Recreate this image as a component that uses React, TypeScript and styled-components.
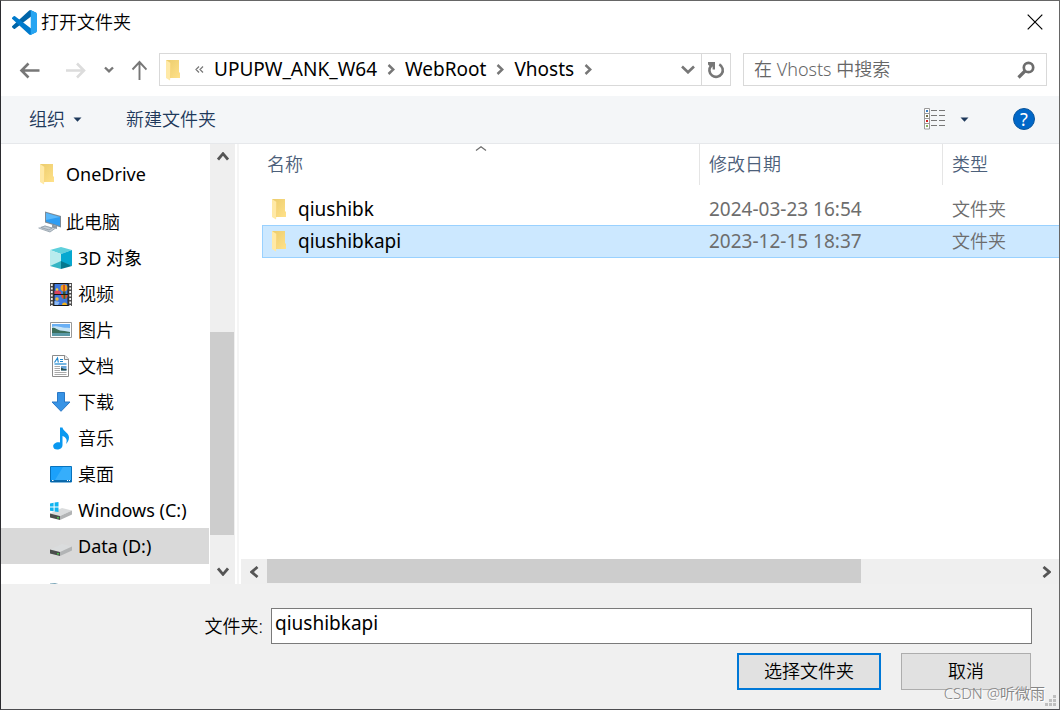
import React from "react";
import styled, { createGlobalStyle } from "styled-components";

const GlobalStyle = createGlobalStyle`
  *, *::before, *::after { box-sizing: border-box; }
  body { margin: 0; }
  body, button, input, table {
    font-family: "Noto Sans", "Noto Sans CJK SC", sans-serif;
    font-size: 18px;
    font-weight: 350;
    line-height: 24px;
  }
  button { margin: 0; padding: 0; border: 0; background: none; color: inherit; }
  svg { display: block; flex: none; }
`;

const Dialog = styled.div`
  position: relative;
  display: flex;
  flex-direction: column;
  height: 100vh;
  min-height: 480px;
  overflow: hidden;
  background: #ffffff;
  color: #000000;
  border: 1px solid #666666;
  border-left-color: #2b2b2f;
  border-bottom-color: #4c4c50;
`;

const TitleBar = styled.header`
  display: flex;
  align-items: center;
  gap: 4px;
  height: 42px;
  padding: 0 16px 0 11px;
`;

const Title = styled.h1`
  flex: 1;
  margin: 0;
  font-size: 18px;
  font-weight: 350;
`;

const NavRow = styled.nav`
  display: flex;
  align-items: center;
  height: 53px;
  padding: 0 12px 0 18px;
`;

const NavButtons = styled.div`
  display: flex;
  align-items: center;
  gap: 17px;
  margin-right: 12px;
`;

const IconButton = styled.button<{ $color?: string }>`
  display: flex;
  align-items: center;
  justify-content: center;
  color: ${(p) => p.$color ?? "#777777"};
`;

const BackButton = styled(IconButton)`
  margin-right: 9px;
`;

const AddressBar = styled.div`
  display: flex;
  align-items: center;
  flex: 1;
  min-width: 0;
  height: 33px;
  padding-left: 6px;
  border: 1px solid #d9d9d9;
  color: #777777;
`;

const Crumbs = styled.ol`
  display: flex;
  align-items: center;
  gap: 10px;
  flex: 1;
  margin: 0 0 0 13px;
  padding: 0;
  list-style: none;
  white-space: nowrap;
`;

const Crumb = styled.li`
  display: flex;
  align-items: center;
  gap: 10px;
`;

const CrumbButton = styled.button`
  padding-bottom: 2px;
  font-size: 19px;
  font-weight: 400;
  color: #000000;
`;

const RefreshButton = styled(IconButton)`
  width: 29px;
  height: 31px;
  margin-left: 6px;
  border-left: 1px solid #d9d9d9;
`;

const SearchBox = styled.label`
  display: flex;
  align-items: center;
  flex: 0 1 304px;
  min-width: 0;
  height: 33px;
  margin-left: 12px;
  padding: 0 11px 0 10px;
  border: 1px solid #d9d9d9;
  color: #6d6d6d;
`;

const SearchInput = styled.input`
  flex: 1;
  min-width: 0;
  padding: 0 0 2px;
  border: 0;
  outline: 0;
  background: none;
  &::placeholder { color: #666666; opacity: 1; }
`;

const Toolbar = styled.div`
  display: flex;
  align-items: center;
  flex: none;
  height: 48px;
  padding: 0 24px 1px 28px;
  background: #f4f6f8;
  border-bottom: 1px solid #e6e8eb;
  color: #1e395b;
`;

const ToolButton = styled.button`
  display: flex;
  align-items: center;
  gap: 8px;
  margin-right: 44px;
`;

const ToolSpacer = styled.div`
  flex: 1;
`;

const ViewButton = styled(ToolButton)`
  gap: 14px;
`;

const Main = styled.main`
  display: flex;
  flex: 1;
  min-height: 0;
`;

const Tree = styled.ul`
  width: 209px;
  margin: 0;
  padding: 12px 1px 0 0;
  overflow: hidden;
  list-style: none;
`;

const TreeItem = styled.li<{ $level?: number; $selected?: boolean; $gap?: boolean; $latin?: boolean }>`
  display: flex;
  align-items: center;
  gap: ${(p) => (p.$level ? 6 : 4)}px;
  height: 36px;
  margin-top: ${(p) => (p.$gap ? 12 : 0)}px;
  padding-left: ${(p) => (p.$level ? 49 : 37)}px;
  background: ${(p) => (p.$selected ? "#d9d9d9" : "transparent")};
  font-weight: ${(p) => (p.$latin ? 400 : 350)};
  white-space: nowrap;
`;

const VScroll = styled.div`
  display: flex;
  flex-direction: column;
  width: 25px;
  background: #efefef;
`;

const ScrollButton = styled(IconButton)`
  flex: none;
  width: 25px;
  height: 25px;
  color: #555555;
`;

const ScrollGap = styled.div<{ $share: number }>`
  flex: ${(p) => p.$share} 1 0;
`;

const VThumb = styled.div`
  flex: 203 1 0;
  width: 24px;
  background: #cdcdcd;
`;

const Splitter = styled.div`
  width: 2px;
  margin: 0 2px;
  background: #f5f5f5;
`;

const FilePane = styled.section`
  display: flex;
  flex-direction: column;
  flex: 1;
  min-width: 0;
`;

const FileArea = styled.div`
  flex: 1;
  min-height: 0;
  padding-left: 21px;
  overflow: hidden;
`;

const SortMark = styled.span`
  position: absolute;
  top: 1px;
  left: 50%;
  transform: translateX(-50%);
  color: #6d6d6d;
`;

const FileTable = styled.table`
  width: 100%;
  table-layout: fixed;
  border-collapse: separate;
  border-spacing: 0;
`;

const HeadCell = styled.th<{ $width?: number }>`
  position: relative;
  width: ${(p) => (p.$width ? `${p.$width}px` : "auto")};
  padding: 0 0 8px;
  text-align: left;
  font-weight: 350;
  color: #4c607a;
`;

const HeadLabel = styled.div<{ $last?: boolean; $inset: number }>`
  height: 41px;
  padding: 8px 0 0 ${(p) => p.$inset}px;
  border-right: ${(p) => (p.$last ? "0" : "1px solid #e5e5e5")};
`;

const Row = styled.tr<{ $selected?: boolean }>`
  & > td {
    padding-bottom: ${(p) => (p.$selected ? 1 : 0)}px;
    background: ${(p) => (p.$selected ? "#cce8ff" : "transparent")};
    border: 0 solid ${(p) => (p.$selected ? "#99d1ff" : "transparent")};
    border-width: 1px 0;
  }
  & > td:first-child {
    border-left-width: 1px;
  }
`;

const Cell = styled.td<{ $latin?: boolean }>`
  height: 32px;
  padding: 0 0 0 9px;
  color: #6d6d6d;
  font-size: ${(p) => (p.$latin ? 19 : 18)}px;
  font-weight: ${(p) => (p.$latin ? 400 : 350)};
  line-height: 30px;
  vertical-align: top;
  white-space: nowrap;
`;

const NameCell = styled(Cell)`
  padding-left: 8px;
  color: #000000;
`;

const FileName = styled.span`
  display: flex;
  align-items: center;
  gap: 10px;
`;

const HScroll = styled.div`
  display: flex;
  flex: none;
  height: 25px;
  padding-bottom: 1px;
  background: #efefef;
`;

const HScrollButton = styled(ScrollButton)`
  width: 26px;
`;

const HThumb = styled.div`
  flex: 594 1 0;
  background: #cdcdcd;
`;

const Footer = styled.footer`
  flex: none;
  height: 125px;
  padding: 24px 27px 0 28px;
  background: #f0f0f0;
`;

const FieldRow = styled.div`
  display: flex;
  align-items: center;
  gap: 8px;
`;

const FieldLabel = styled.label`
  width: 234px;
  text-align: right;
`;

const FolderInput = styled.input`
  flex: 1;
  min-width: 0;
  height: 36px;
  padding: 0 3px 6px;
  border: 1px solid #7a7a7a;
  border-radius: 0;
  outline: 0;
  background: #ffffff;
  color: #000000;
  font-size: 19px;
  font-weight: 400;
`;

const Actions = styled.div`
  display: flex;
  justify-content: flex-end;
  gap: 20px;
  padding: 9px 1px 0 0;
`;

const ActionButton = styled.button<{ $primary?: boolean }>`
  width: ${(p) => (p.$primary ? 144 : 130)}px;
  height: 37px;
  padding-bottom: 1px;
  border: ${(p) => (p.$primary ? "2px solid #0078d7" : "1px solid #adadad")};
  background: #e1e1e1;
`;

const Watermark = styled.span`
  position: absolute;
  right: 14px;
  bottom: 5px;
  font-size: 15px;
  line-height: 22px;
  color: #858585;
  text-shadow: 1px 1px 0 #ffffff;
  pointer-events: none;
`;

const Grip = styled.div`
  position: absolute;
  right: 2px;
  bottom: 2px;
  color: #bfbfbf;
`;

const VsCodeLogo = () => (
  <svg width="25" height="25" viewBox="0 0 100 100">
    <path fill="#0065a9" d="M96.46 10.8 75.86.88a6.23 6.23 0 0 0-7.11 1.2L1.3 63.58a4.17 4.17 0 0 0 0 6.17l5.51 5a4.17 4.17 0 0 0 5.32.24L93.36 13.37A4.14 4.14 0 0 1 100 16.67v-.24a6.25 6.25 0 0 0-3.54-5.63Z" />
    <path fill="#007acc" d="m96.46 89.2-20.6 9.92a6.23 6.23 0 0 1-7.11-1.2L1.3 36.42a4.17 4.17 0 0 1 0-6.17l5.51-5a4.17 4.17 0 0 1 5.32-.24l81.23 61.62a4.14 4.14 0 0 0 6.64-3.3v.24a6.25 6.25 0 0 1-3.54 5.63Z" />
    <path fill="#27a5f2" d="M75.86 99.13a6.23 6.23 0 0 1-7.11-1.21c2.3 2.3 6.25.67 6.25-2.59V4.67c0-3.26-3.94-4.9-6.25-2.59A6.23 6.23 0 0 1 75.86.87l20.6 9.91A6.25 6.25 0 0 1 100 16.41v67.18a6.25 6.25 0 0 1-3.54 5.63Z" />
  </svg>
);

const CloseIcon = () => (
  <svg width="16" height="16" viewBox="0 0 16 16" fill="none" stroke="#000" strokeWidth="1.2">
    <path d="M.7.7l14.6 14.6M15.3.7.7 15.3" />
  </svg>
);

const ArrowIcon = ({ flip }: { flip?: boolean }) => (
  <svg width="21" height="18" viewBox="0 0 21 18" fill="none" stroke="currentColor" strokeWidth="2.6">
    {flip ? <path d="M0 9.5H17.5M11 2.5l7 7-7 7" /> : <path d="M20.5 9.5H3M9.5 2.5l-7 7 7 7" />}
  </svg>
);

const UpArrowIcon = () => (
  <svg width="16" height="20" viewBox="0 0 16 20" fill="none" stroke="currentColor" strokeWidth="1.9">
    <path d="M8.5 20V2M1.5 9.5l7-7.5 7 7.5" />
  </svg>
);

const Chevron = ({
  dir,
  w,
  h,
  weight = 2.4,
}: {
  dir: "up" | "down" | "left" | "right";
  w: number;
  h: number;
  weight?: number;
}) => {
  const paths = {
    up: `M1 ${h - 1.5}L${w / 2} 1.7L${w - 1} ${h - 1.5}`,
    down: `M1 1.5L${w / 2} ${h - 1.7}L${w - 1} 1.5`,
    left: `M${w - 1.5} 1L1.7 ${h / 2}L${w - 1.5} ${h - 1}`,
    right: `M1.5 1L${w - 1.7} ${h / 2}L1.5 ${h - 1}`,
  };
  return (
    <svg width={w} height={h} viewBox={`0 0 ${w} ${h}`} fill="none" stroke="currentColor" strokeWidth={weight}>
      <path d={paths[dir]} />
    </svg>
  );
};

const EarlierIcon = () => (
  <svg width="9" height="7" viewBox="0 0 9 7" fill="none" stroke="currentColor" strokeWidth="1.2">
    <path d="M4 .5l-3 3 3 3M8 .5l-3 3 3 3" />
  </svg>
);

const RefreshIcon = () => (
  <svg width="18" height="18" viewBox="0 0 18 18">
    <path d="M12.3 3.3A6.7 6.7 0 1 1 4 4.8" fill="none" stroke="currentColor" strokeWidth="2.6" />
    <path d="M1 1h7v7.5H5.6V5.5L4 6.5 1 3.4Z" fill="currentColor" />
  </svg>
);

const SearchIcon = () => (
  <svg width="18" height="18" viewBox="0 0 18 18" fill="none" stroke="currentColor">
    <circle cx="11.5" cy="6.5" r="4.7" strokeWidth="2.7" />
    <path d="M8 10 1.5 16.5" strokeWidth="3.2" />
  </svg>
);

const Caret = () => (
  <svg width="9" height="5" viewBox="0 0 9 5" fill="currentColor">
    <path d="M.5.5h8l-4 4.2Z" />
  </svg>
);

const ViewIcon = () => (
  <svg width="22" height="22" viewBox="0 0 22 22">
    <path d="M.5.5h5v20.5h-5zM.5 5.5h5M.5 10.5h5M.5 15.5h5" fill="#fff" stroke="#9a9a9a" />
    <path d="M2 2h2v2H2z" fill="#3f7fc0" />
    <path d="M2 7h2v2H2z" fill="#70704a" />
    <path d="M2 12h2v2H2z" fill="#d02020" />
    <path d="M2 17h2v2H2z" fill="#8bb060" />
    <path d="M7 2.5h6M15 2.5h6M7 7.5h6M15 7.5h6M7 12.5h6M15 12.5h6M7 17.5h6M15 17.5h6" stroke="#777" />
  </svg>
);

const HelpBadge = styled(IconButton)`
  width: 22px;
  height: 22px;
  border: 1px solid #0a559c;
  border-radius: 50%;
  background: #0067c8;
  color: #ffffff;
  font-weight: 400;
  line-height: 20px;
`;

const FolderIcon = ({ w = 16, pad = 0 }: { w?: number; pad?: number }) => (
  <svg width={w} height="22" viewBox={`${-pad} 0 ${w} 22`}>
    <defs>
      <linearGradient id="folderBack" x1="0" x2="1" y1="0" y2="1">
        <stop offset="0" stopColor="#ebcc6c" />
        <stop offset="1" stopColor="#ffe18a" />
      </linearGradient>
    </defs>
    <path d="M0 1h13v12l1 1v5H3Z" fill="url(#folderBack)" />
    <path d="M0 1l4.500 3v13L4 21.500 0 19Z" fill="#ffe9a6" />
    <path d="M4.500 4v15" stroke="#f8d77e" />
  </svg>
);

const PcIcon = () => (
  <svg width="24" height="22" viewBox="0 0 24 22">
    <path d="M7 .5 23 5v11.5L7 11.5Z" fill="#7c8b98" />
    <path d="M8 2l14 4v9L8 10.5Z" fill="#2f9df2" />
    <path d="M8 2l14 4L8 9Z" fill="#5ab8fa" />
    <path d="M14 13.5l5 1.5v3l-5-1Z" fill="#8e9aa4" />
    <path d="M.5 16.5 7 14.5l10 3-5 3.5Z" fill="#c3ccd4" />
    <path d="M3 16.5l4-1.5 7 2-3 2ZM.5 17l11.5 4 5-3.5" fill="none" stroke="#8d9aa6" strokeWidth=".8" />
  </svg>
);

const CubeIcon = () => (
  <svg width="22" height="22" viewBox="0 0 22 22">
    <path d="M11 0l11 3-11 4L0 3Z" fill="#5fd0dc" />
    <path d="M0 3l11 4v9L0 19Z" fill="#b9ecee" />
    <path d="M22 3 11 7v9l11 3Z" fill="#06a8d0" />
    <path d="M0 19l11-5v8Z" fill="#35b5c4" />
    <path d="M22 19l-11-5v8Z" fill="#04798f" />
  </svg>
);

const VideoIcon = () => (
  <svg width="22" height="23" viewBox="0 0 22 23">
    <path d="M0 0h22v23H0z" fill="#4a4a4a" />
    <path d="M1.8 1v22M20.2 1v22" stroke="#f0f0f0" strokeWidth="1.8" strokeDasharray="2 1.5" />
    <path d="M3.5 0h15v23h-15z" fill="#151515" />
    <path d="M4.5 1h13v10h-13zM4.5 12h13v10h-13z" fill="#3f78dc" />
    <path d="M4.5 8l3.5-1 3 2v2H4.5z" fill="#d8455f" />
    <circle cx="7" cy="6.5" r="1.3" fill="#f4cf3a" />
    <circle cx="14" cy="5" r="3.4" fill="#f0a51c" />
    <path d="M13.3 1.8h1.5v6.4h-1.5z" fill="#c63b28" />
    <path d="M13 8.5h2.5V11H13z" fill="#3d5a2a" />
    <path d="M11 12h6.5c0 2.5-1.5 4-3.2 4S11 14.5 11 12Z" fill="#e2532d" />
    <path d="M13.5 12h1.8v4h-1.8z" fill="#2f6b3c" />
    <circle cx="7" cy="16" r="1.7" fill="#efb83a" />
    <path d="M4.5 18l5 1-1.5 3H4.5z" fill="#8bb9f5" />
    <path d="M12 22a2.5 2.5 0 0 1 5 0Z" fill="#f1b41f" />
  </svg>
);

const PictureIcon = () => (
  <svg width="22" height="16" viewBox="0 0 22 16">
    <path d="M.5.5h21v15H.5z" fill="#fff" stroke="#999" />
    <path d="M2 2h18v12H2z" fill="#6ab0f5" />
    <path d="M2 5c4-2 8 1 18 1v4H2z" fill="#c5e3f6" />
    <path d="M2 6c3-1 5 2 8 2.5 3 .5 6 .5 10 1.5v1H2z" fill="#3b6f5c" />
    <path d="M2 11h18v3H2z" fill="#5b9aa8" />
  </svg>
);

const DocIcon = () => (
  <svg width="22" height="22" viewBox="0 0 22 22">
    <path d="M2.5.5H15L18.5 4v17.5h-16Z" fill="#fff" stroke="#8b8b8b" />
    <path d="M14.5.5v4h4" fill="#eee" stroke="#8b8b8b" />
    <path d="M4.5 7.5 7.5 3l.8 4.5M10 4.5h3M10 6.5h3" fill="none" stroke="#1c87cf" strokeWidth="1.2" />
    <path d="M4.5 9h12" stroke="#1c87cf" strokeWidth="1.2" />
    <path d="M4.5 11.5h5.5M4.5 13.5h5.5M4.5 15.5h5.5M4.5 17.5h12M4.5 19.5h12" stroke="#aaa" />
    <path d="M11 11h5.5v4.5H11z" fill="#6aa6d8" />
    <path d="M11 12.5l3 1.5h2.5v1.5H11z" fill="#294f4e" />
  </svg>
);

const DownloadIcon = () => (
  <svg width="22" height="20" viewBox="0 0 22 20">
    <path d="M7.5.5h7v9.5h5.5L11 19.3 2 10h5.5Z" fill="#3793e5" stroke="#2a78c6" />
  </svg>
);

const MusicIcon = () => (
  <svg width="22" height="23" viewBox="0 0 22 23">
    <path
      d="M10 .5h2.5c.5 4 6.5 5 6.5 10 0 3-1.5 5-3 6.5 1.5-4 .5-6.5-3.500-8v9c0 3-2.500 4.500-5.300 4.500-2.500 0-4-1.300-4-3.300 0-2.500 3.300-4.500 6.800-3.700Z"
      fill="#0a98f0"
    />
  </svg>
);

const DesktopIcon = () => (
  <svg width="22" height="17" viewBox="0 0 22 17">
    <path d="M.5.5h21v15.5H.5z" fill="#1ba1fb" stroke="#0873bd" />
    <path d="M13 1h8v13H5Z" fill="#36aefb" />
    <path d="M1 15h20" stroke="#075a96" strokeWidth="1.5" />
    <path d="M2 14.5h1.5M17 14.5h1M19 14.5h1" stroke="#fff" />
  </svg>
);

const DriveIcon = ({ system }: { system?: boolean }) => (
  <svg width="22" height="19" viewBox="0 0 22 19">
    <path d="M0 12.5 12 7l10 2.5-12 5.5Z" fill="#dadcdd" />
    <path d="M0 12.5 10 15v4L0 16.5Z" fill="#4a4d4c" />
    <path d="M10 15 22 9.5v4L10 19Z" fill="#b2b4b5" />
    <path d="M8 16v1.5" stroke="#4bdc4b" strokeWidth="1.5" />
    {system && (
      <path d="M0 2.4l3.6-.6v3.8H0zM4.6 1.6 8.5 1v4.6H4.6zM0 6.5h3.6v3.8L0 9.7zM4.6 6.5h3.9v4.6l-3.9-.6z" fill="#10b4f0" />
    )}
  </svg>
);

const NetworkIcon = () => (
  <svg width="22" height="22" viewBox="0 0 22 22">
    <path d="M0 6V.5L5 0l13 4v9Z" fill="#7ba6b8" />
  </svg>
);

const crumbs = ["UPUPW_ANK_W64", "WebRoot", "Vhosts"];

type TreeNode = {
  label: string;
  icon: React.ReactNode;
  level?: number;
  gap?: boolean;
  latin?: boolean;
  selected?: boolean;
};

const tree: TreeNode[] = [
  { label: "OneDrive", icon: <FolderIcon w={24} pad={2} />, latin: true },
  { label: "此电脑", icon: <PcIcon />, gap: true },
  { label: "3D 对象", icon: <CubeIcon />, level: 1, latin: true },
  { label: "视频", icon: <VideoIcon />, level: 1 },
  { label: "图片", icon: <PictureIcon />, level: 1 },
  { label: "文档", icon: <DocIcon />, level: 1 },
  { label: "下载", icon: <DownloadIcon />, level: 1 },
  { label: "音乐", icon: <MusicIcon />, level: 1 },
  { label: "桌面", icon: <DesktopIcon />, level: 1 },
  { label: "Windows (C:)", icon: <DriveIcon system />, level: 1, latin: true },
  { label: "Data (D:)", icon: <DriveIcon />, level: 1, latin: true, selected: true },
  { label: "", icon: <NetworkIcon />, level: 1, gap: true },
];

const files = [
  { name: "qiushibk", date: "2024-03-23 16:54", type: "文件夹" },
  { name: "qiushibkapi", date: "2023-12-15 18:37", type: "文件夹", selected: true },
];

export default function App() {
  return (
    <>
      <GlobalStyle />
      <Dialog role="dialog" aria-labelledby="dialog-title">
        <TitleBar>
          <VsCodeLogo />
          <Title id="dialog-title">打开文件夹</Title>
          <IconButton aria-label="关闭">
            <CloseIcon />
          </IconButton>
        </TitleBar>

        <NavRow>
          <NavButtons>
            <BackButton aria-label="后退"><ArrowIcon /></BackButton>
            <IconButton aria-label="前进" $color="#dcdcdc"><ArrowIcon flip /></IconButton>
            <IconButton aria-label="最近位置"><Chevron dir="down" w={10} h={7} /></IconButton>
            <IconButton aria-label="上移"><UpArrowIcon /></IconButton>
          </NavButtons>
          <AddressBar>
            <FolderIcon />
            <Crumbs>
              <Crumb>
                <EarlierIcon />
              </Crumb>
              {crumbs.map((c) => (
                <Crumb key={c}>
                  <CrumbButton>{c}</CrumbButton>
                  <Chevron dir="right" w={8} h={11} />
                </Crumb>
              ))}
            </Crumbs>
            <IconButton aria-label="以前的位置"><Chevron dir="down" w={14} h={9} weight={2.6} /></IconButton>
            <RefreshButton aria-label="刷新"><RefreshIcon /></RefreshButton>
          </AddressBar>
          <SearchBox>
            <SearchInput type="text" aria-label="搜索" placeholder="在 Vhosts 中搜索" />
            <SearchIcon />
          </SearchBox>
        </NavRow>

        <Toolbar>
          <ToolButton>组织<Caret /></ToolButton>
          <ToolButton>新建文件夹</ToolButton>
          <ToolSpacer />
          <ViewButton aria-label="更改视图"><ViewIcon /><Caret /></ViewButton>
          <HelpBadge aria-label="帮助">?</HelpBadge>
        </Toolbar>

        <Main>
          <Tree>
            {tree.map((t, i) => (
              <TreeItem key={i} $level={t.level} $gap={t.gap} $latin={t.latin} $selected={t.selected}>
                {t.icon}
                {t.label}
              </TreeItem>
            ))}
          </Tree>
          <VScroll>
            <ScrollButton aria-label="向上滚动"><Chevron dir="up" w={12} h={9} weight={2.8} /></ScrollButton>
            <ScrollGap $share={163} />
            <VThumb />
            <ScrollGap $share={24} />
            <ScrollButton aria-label="向下滚动"><Chevron dir="down" w={12} h={9} weight={2.8} /></ScrollButton>
          </VScroll>
          <Splitter />

          <FilePane>
            <FileArea>
              <FileTable>
                <thead>
                  <tr>
                    <HeadCell>
                      <HeadLabel $inset={5}>名称</HeadLabel>
                      <SortMark><Chevron dir="up" w={12} h={7} weight={1.2} /></SortMark>
                    </HeadCell>
                    <HeadCell $width={243}><HeadLabel $inset={9}>修改日期</HeadLabel></HeadCell>
                    <HeadCell $width={116}><HeadLabel $inset={9} $last>类型</HeadLabel></HeadCell>
                  </tr>
                </thead>
                <tbody>
                  {files.map((f) => (
                    <Row key={f.name} $selected={f.selected}>
                      <NameCell $latin>
                        <FileName><FolderIcon w={17} pad={1} />{f.name}</FileName>
                      </NameCell>
                      <Cell $latin>{f.date}</Cell>
                      <Cell>{f.type}</Cell>
                    </Row>
                  ))}
                </tbody>
              </FileTable>
            </FileArea>
            <HScroll>
              <HScrollButton aria-label="向左滚动"><Chevron dir="left" w={9} h={12} weight={2.8} /></HScrollButton>
              <HThumb />
              <ScrollGap $share={172} />
              <HScrollButton aria-label="向右滚动"><Chevron dir="right" w={9} h={12} weight={2.8} /></HScrollButton>
            </HScroll>
          </FilePane>
        </Main>

        <Footer>
          <FieldRow>
            <FieldLabel htmlFor="folder-name">文件夹:</FieldLabel>
            <FolderInput id="folder-name" type="text" defaultValue="qiushibkapi" />
          </FieldRow>
          <Actions>
            <ActionButton $primary>选择文件夹</ActionButton>
            <ActionButton>取消</ActionButton>
          </Actions>
        </Footer>

        <Watermark>CSDN @听微雨</Watermark>
        <Grip>
          <svg width="12" height="12" viewBox="0 0 12 12" fill="currentColor">
            <path d="M8 0h3v3H8zM4 4h3v3H4zM8 4h3v3H8zM0 8h3v3H0zM4 8h3v3H4zM8 8h3v3H8z" />
          </svg>
        </Grip>
      </Dialog>
    </>
  );
}
